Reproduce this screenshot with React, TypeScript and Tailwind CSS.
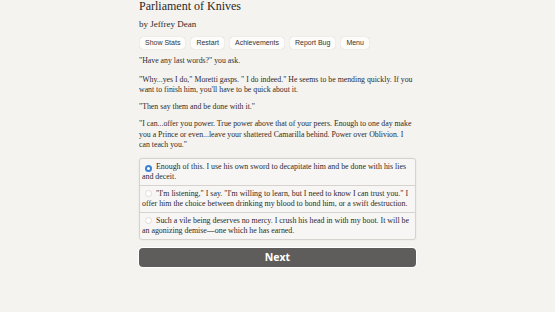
import React, { useState } from 'react';

const serif = { fontFamily: '"Liberation Serif", "Times New Roman", serif' };

const buttons = ['Show Stats', 'Restart', 'Achievements', 'Report Bug', 'Menu'];

const options = [
  'Enough of this. I use his own sword to decapitate him and be done with his lies and deceit.',
  '"I\'m listening," I say. "I\'m willing to learn, but I need to know I can trust you." I offer him the choice between drinking my blood to bond him, or a swift destruction.',
  'Such a vile being deserves no mercy. I crush his head in with my boot. It will be an agonizing demise\u2014one which he has earned.',
];

const App: React.FC = () => {
  const [choice, setChoice] = useState(0);

  return (
    <div className="min-h-[312px] w-full bg-[#f5f3f0] text-[#2d2b29]" style={serif}>
      <div className="mx-auto w-[277px]">
        {/* Header */}
        <h1 className="text-[12px] leading-[13px] text-[#2a2826]">Parliament of Knives</h1>
        <p className="mt-[6px] text-[9px] leading-[10px]">by Jeffrey Dean</p>

        <div className="mt-[8px] flex gap-[6px] pl-[1px]" style={{ fontFamily: '"Liberation Sans", Arial, sans-serif' }}>
          {buttons.map((b) => (
            <button
              key={b}
              className="h-[12px] rounded-[3px] bg-[#fdfcfa] px-[5px] text-[7px] leading-[12px] text-[#333] shadow-[0_0_1px_rgba(0,0,0,0.25)]"
            >
              {b}
            </button>
          ))}
        </div>

        {/* Story text */}
        <div className="mt-[7px] space-y-[6.5px] text-[7.8px] leading-[10.5px]">
          <p>"Have any last words?" you ask.</p>
          <p className="!mt-[8px]">
            "Why...yes I do," Moretti gasps. " I do indeed." He seems to be mending quickly. If you want to finish
            him, you'll have to be quick about it.
          </p>
          <p>"Then say them and be done with it."</p>
          <p>
            "I can...offer you power. True power above that of your peers. Enough to one day make you a Prince or
            even...leave your shattered Camarilla behind. Power over Oblivion. I can teach you."
          </p>
        </div>

        {/* Choices */}
        <div className="mt-[7px] rounded-[3px] border border-[#d6d3cf] bg-[#f7f6f4] shadow-[0_0_2px_rgba(0,0,0,0.08)]">
          {options.map((o, i) => (
            <label
              key={i}
              className={`block cursor-pointer px-[2px] py-[3px] text-[7.9px] leading-[10px] ${
                i > 0 ? 'border-t border-[#d6d3cf]' : ''
              }`}
            >
              <span className="mr-[4px] ml-[3px] inline-flex h-[7px] w-[7px] items-center justify-center align-[-1px]">
                {choice === i ? (
                  <span className="flex h-[7px] w-[7px] items-center justify-center rounded-full bg-[#3b82d6]">
                    <span className="h-[3px] w-[3px] rounded-full bg-white" />
                  </span>
                ) : (
                  <span className="h-[7px] w-[7px] rounded-full border border-[#dedbd7] bg-white" />
                )}
              </span>
              <input type="radio" className="hidden" checked={choice === i} onChange={() => setChoice(i)} />
              {o}
            </label>
          ))}
        </div>

        <button
          className="mt-[8px] h-[19px] w-full rounded-[4px] bg-[#5e5d5b] text-[10.5px] font-bold leading-[19px] text-white shadow-[0_0_0_1px_#ffffff]"
          style={{ fontFamily: '"Open Sans", "Liberation Sans", sans-serif' }}
        >
          Next
        </button>
      </div>
    </div>
  );
};

export default App;
